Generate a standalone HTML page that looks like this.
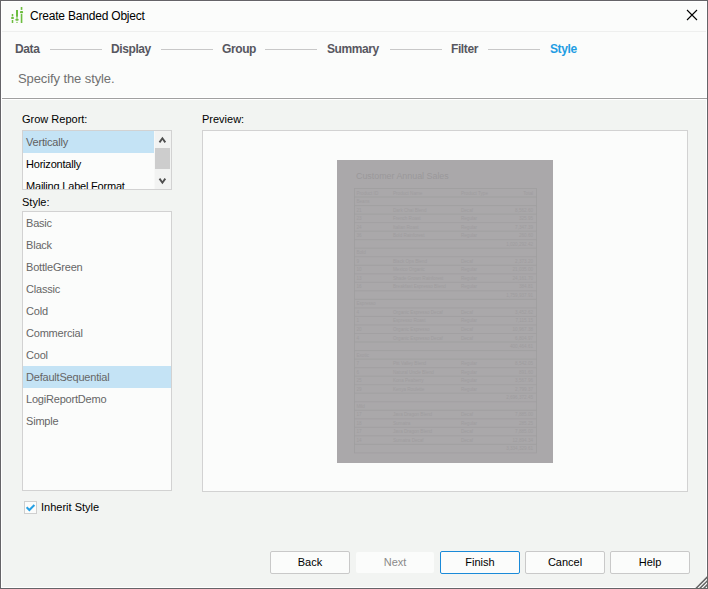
<!DOCTYPE html>
<html><head><meta charset="utf-8">
<style>
*{margin:0;padding:0;box-sizing:border-box}
html,body{width:708px;height:589px;overflow:hidden;background:#f2f4f2;font-family:"Liberation Sans",sans-serif}
.a{position:absolute;white-space:nowrap}
#win{position:absolute;left:0;top:0;width:708px;height:589px;border:1px solid #656468;background:#f2f4f2}
#inner{position:absolute;left:1px;top:1px;width:706px;height:587px;border:1px solid #ffffff}
#head{position:absolute;left:2px;top:2px;width:704px;height:96px;background:#fbfcfb}
.t11{font-size:11px;line-height:11px}
.li{letter-spacing:-0.2px}
.step{font-size:12px;line-height:12px;letter-spacing:-0.4px;font-weight:bold;color:#575760}
.ln{position:absolute;height:1px;background:#c8c8c8;top:49px;width:52px}
.lb{position:absolute;border:1px solid #d2d2d2;background:#fbfcfb}
.row{position:absolute;left:0;height:22px;width:100%}
.btn{position:absolute;top:551px;width:80px;height:23px;border:1px solid #c9c9c9;border-radius:2px;background:#fbfcfb;font-size:11px;text-align:center;line-height:21px;color:#000}
</style></head><body>
<div id="win"></div>
<div id="inner"></div>
<div id="head"></div>
<!-- title separator -->
<div class="a" style="left:2px;top:31px;width:704px;height:1px;background:#eeefee"></div>
<!-- icon -->
<svg class="a" style="left:0;top:0" width="30" height="30" viewBox="0 0 30 30">
 <g fill="#6cbd3f">
  <rect x="11.75" y="14" width="1.5" height="2.4"/>
  <rect x="11" y="16.9" width="3" height="2" rx="1"/>
  <rect x="11.75" y="20" width="1.5" height="3"/>
  <rect x="16" y="10" width="2" height="6.8"/>
  <rect x="16" y="16.8" width="2" height="2" opacity="0.5"/>
  <rect x="15.3" y="18.8" width="3.4" height="2" rx="1"/>
  <rect x="16" y="21.9" width="2" height="0.9" opacity="0.7"/>
  <rect x="20.75" y="7" width="1.6" height="2.9"/>
  <rect x="20" y="11.1" width="3.1" height="2.1" rx="0.8"/>
  <rect x="20.75" y="14" width="1.6" height="9"/>
 </g>
</svg>
<div class="a" style="left:30px;top:10px;font-size:12px;letter-spacing:-0.2px;line-height:12px;color:#000">Create Banded Object</div>
<!-- close -->
<svg class="a" style="left:686px;top:9px" width="12" height="12" viewBox="0 0 12 12">
 <path d="M1 1L11 11M11 1L1 11" stroke="#000" stroke-width="1.1"/>
</svg>
<!-- steps -->
<div class="a step" style="left:15px;top:43px">Data</div>
<div class="ln" style="left:50px"></div>
<div class="a step" style="left:111px;top:43px">Display</div>
<div class="ln" style="left:161px"></div>
<div class="a step" style="left:222px;top:43px">Group</div>
<div class="ln" style="left:265px"></div>
<div class="a step" style="left:327px;top:43px">Summary</div>
<div class="ln" style="left:390px"></div>
<div class="a step" style="left:451px;top:43px">Filter</div>
<div class="ln" style="left:488px"></div>
<div class="a step" style="left:550px;top:43px;color:#1f9de3">Style</div>
<div class="a" style="left:18px;top:72px;font-size:13px;letter-spacing:-0.1px;line-height:13px;color:#707070">Specify the style.</div>
<!-- separator -->
<div class="a" style="left:2px;top:97px;width:704px;height:1px;background:#ffffff"></div>
<div class="a" style="left:2px;top:98px;width:705px;height:1px;background:#a0a0a0"></div>
<div class="a" style="left:2px;top:99px;width:704px;height:1px;background:#ffffff"></div>

<!-- grow report -->
<div class="a t11" style="left:22px;top:114px;color:#000">Grow Report:</div>
<div class="lb" style="left:22px;top:130px;width:150px;height:60px;overflow:hidden">
  <div class="row" style="top:0;width:131px;background:#c4e3f5"></div>
  <div class="a t11 li" style="left:3px;top:6px;color:#5f5f5f">Vertically</div>
  <div class="a t11 li" style="left:3px;top:28px;color:#000">Horizontally</div>
  <div class="a t11 li" style="left:3px;top:50px;color:#000">Mailing Label Format</div>
  <div class="a" style="left:131px;top:0;width:17px;height:58px;background:#f2f3f2;border-left:1px solid #f7f8f7"></div>
  <div class="a" style="left:132px;top:17px;width:15px;height:21px;background:#cdcdcd"></div>
  <svg class="a" style="left:131px;top:0" width="17" height="58" viewBox="0 0 17 58">
    <path d="M5.5 11.4L8.4 7.3L11.3 11.4M5.5 47.6L8.4 51.7L11.3 47.6" fill="none" stroke="#4f4f4f" stroke-width="1.9"/>
  </svg>
</div>

<!-- style -->
<div class="a t11" style="left:22px;top:197px;color:#000">Style:</div>
<div class="lb" style="left:22px;top:211px;width:150px;height:280px;overflow:hidden">
  <div class="row" style="top:154px;background:#c4e3f5"></div>
  <div class="a t11 li" style="left:3px;top:6px;color:#666">Basic</div>
  <div class="a t11 li" style="left:3px;top:28px;color:#666">Black</div>
  <div class="a t11 li" style="left:3px;top:50px;color:#666">BottleGreen</div>
  <div class="a t11 li" style="left:3px;top:72px;color:#666">Classic</div>
  <div class="a t11 li" style="left:3px;top:94px;color:#666">Cold</div>
  <div class="a t11 li" style="left:3px;top:116px;color:#666">Commercial</div>
  <div class="a t11 li" style="left:3px;top:138px;color:#666">Cool</div>
  <div class="a t11 li" style="left:3px;top:160px;color:#666">DefaultSequential</div>
  <div class="a t11 li" style="left:3px;top:182px;color:#666">LogiReportDemo</div>
  <div class="a t11 li" style="left:3px;top:204px;color:#666">Simple</div>
</div>

<!-- inherit -->
<div class="a" style="left:24px;top:501px;width:13px;height:13px;border:1px solid #cfcfcf;background:#fbfcfb"></div>
<svg class="a" style="left:24px;top:501px" width="13" height="13" viewBox="0 0 13 13">
  <path d="M2.6 6.3L5.4 9.0L10.4 4.0" fill="none" stroke="#25a0e4" stroke-width="2"/>
</svg>
<div class="a t11" style="left:41px;top:502px;color:#000">Inherit Style</div>

<!-- preview -->
<div class="a t11" style="left:202px;top:114px;color:#000">Preview:</div>
<div class="lb" style="left:202px;top:130px;width:486px;height:362px"></div>
<svg class="a" style="left:337px;top:160px" width="216" height="303" viewBox="0 0 216 303">
<rect x="0" y="0" width="216" height="303" fill="#aaa8aa"/>
<text x="19" y="18.6" font-family="Liberation Sans" font-size="8.9" fill="#9a989a">Customer Annual Sales</text>
<g stroke="#a09ea0" stroke-width="0.8" fill="none">
<rect x="17.5" y="28.5" width="182.0" height="264.43"/>
<line x1="17.5" y1="37.03" x2="199.5" y2="37.03"/>
<line x1="17.5" y1="45.56" x2="199.5" y2="45.56"/>
<line x1="17.5" y1="54.09" x2="199.5" y2="54.09"/>
<line x1="17.5" y1="62.62" x2="199.5" y2="62.62"/>
<line x1="17.5" y1="71.15" x2="199.5" y2="71.15"/>
<line x1="17.5" y1="79.68" x2="199.5" y2="79.68"/>
<line x1="17.5" y1="88.21" x2="199.5" y2="88.21"/>
<line x1="17.5" y1="96.74" x2="199.5" y2="96.74"/>
<line x1="17.5" y1="105.27" x2="199.5" y2="105.27"/>
<line x1="17.5" y1="113.80" x2="199.5" y2="113.80"/>
<line x1="17.5" y1="122.33" x2="199.5" y2="122.33"/>
<line x1="17.5" y1="130.86" x2="199.5" y2="130.86"/>
<line x1="17.5" y1="139.39" x2="199.5" y2="139.39"/>
<line x1="17.5" y1="147.92" x2="199.5" y2="147.92"/>
<line x1="17.5" y1="156.45" x2="199.5" y2="156.45"/>
<line x1="17.5" y1="164.98" x2="199.5" y2="164.98"/>
<line x1="17.5" y1="173.51" x2="199.5" y2="173.51"/>
<line x1="17.5" y1="182.04" x2="199.5" y2="182.04"/>
<line x1="17.5" y1="190.57" x2="199.5" y2="190.57"/>
<line x1="17.5" y1="199.10" x2="199.5" y2="199.10"/>
<line x1="17.5" y1="207.63" x2="199.5" y2="207.63"/>
<line x1="17.5" y1="216.16" x2="199.5" y2="216.16"/>
<line x1="17.5" y1="224.69" x2="199.5" y2="224.69"/>
<line x1="17.5" y1="233.22" x2="199.5" y2="233.22"/>
<line x1="17.5" y1="241.75" x2="199.5" y2="241.75"/>
<line x1="17.5" y1="250.28" x2="199.5" y2="250.28"/>
<line x1="17.5" y1="258.81" x2="199.5" y2="258.81"/>
<line x1="17.5" y1="267.34" x2="199.5" y2="267.34"/>
<line x1="17.5" y1="275.87" x2="199.5" y2="275.87"/>
<line x1="17.5" y1="284.40" x2="199.5" y2="284.40"/>
</g>
<g font-family="Liberation Sans" font-size="4.6" fill="#9f9d9f">
<text x="19.5" y="34.50">Product ID</text>
<text x="56" y="34.50">Product Name</text>
<text x="124" y="34.50">Product Type</text>
<text x="196" y="34.50" text-anchor="end">Total</text>
<text x="19.5" y="43.03">Beans</text>
<text x="19.5" y="51.56">21</text>
<text x="56" y="51.56">Dark Chai Blend</text>
<text x="124" y="51.56">Decaf</text>
<text x="196" y="51.56" text-anchor="end">8,562.60</text>
<text x="19.5" y="60.09">23</text>
<text x="56" y="60.09">French Roast</text>
<text x="124" y="60.09">Regular</text>
<text x="196" y="60.09" text-anchor="end">325.95</text>
<text x="19.5" y="68.62">24</text>
<text x="56" y="68.62">Italian Roast</text>
<text x="124" y="68.62">Regular</text>
<text x="196" y="68.62" text-anchor="end">7,347.39</text>
<text x="19.5" y="77.15">36</text>
<text x="56" y="77.15">Bold Rainforest</text>
<text x="124" y="77.15">Regular</text>
<text x="196" y="77.15" text-anchor="end">260.60</text>
<text x="196" y="85.68" text-anchor="end">1,020,292.42</text>
<text x="19.5" y="94.21">Bold</text>
<text x="19.5" y="102.74">9</text>
<text x="56" y="102.74">Black Ops Blend</text>
<text x="124" y="102.74">Decaf</text>
<text x="196" y="102.74" text-anchor="end">2,373.20</text>
<text x="19.5" y="111.27">10</text>
<text x="56" y="111.27">Mexico Organic</text>
<text x="124" y="111.27">Regular</text>
<text x="196" y="111.27" text-anchor="end">21,035.00</text>
<text x="19.5" y="119.80">13</text>
<text x="56" y="119.80">Shade Grown Rainforest</text>
<text x="124" y="119.80">Regular</text>
<text x="196" y="119.80" text-anchor="end">24,161.70</text>
<text x="19.5" y="128.33">16</text>
<text x="56" y="128.33">Breakfast Espresso Blend</text>
<text x="124" y="128.33">Regular</text>
<text x="196" y="128.33" text-anchor="end">384.81</text>
<text x="196" y="136.86" text-anchor="end">1,759,937.91</text>
<text x="19.5" y="145.39">Espresso</text>
<text x="19.5" y="153.92">4</text>
<text x="56" y="153.92">Organic Espresso Decaf</text>
<text x="124" y="153.92">Decaf</text>
<text x="196" y="153.92" text-anchor="end">3,452.62</text>
<text x="19.5" y="162.45">1</text>
<text x="56" y="162.45">Espresso Roast</text>
<text x="124" y="162.45">Regular</text>
<text x="196" y="162.45" text-anchor="end">7,115.15</text>
<text x="19.5" y="170.98">20</text>
<text x="56" y="170.98">Organic Espresso</text>
<text x="124" y="170.98">Decaf</text>
<text x="196" y="170.98" text-anchor="end">10,967.38</text>
<text x="19.5" y="179.51">4</text>
<text x="56" y="179.51">Organic Espresso Decaf</text>
<text x="124" y="179.51">Decaf</text>
<text x="196" y="179.51" text-anchor="end">6,804.97</text>
<text x="196" y="188.04" text-anchor="end">400,464.61</text>
<text x="19.5" y="196.57">Exotic</text>
<text x="19.5" y="205.10">7</text>
<text x="56" y="205.10">Pitt Valley Blend</text>
<text x="124" y="205.10">Regular</text>
<text x="196" y="205.10" text-anchor="end">8,542.05</text>
<text x="19.5" y="213.63">6</text>
<text x="56" y="213.63">Natural Uncle Blend</text>
<text x="124" y="213.63">Regular</text>
<text x="196" y="213.63" text-anchor="end">891.60</text>
<text x="19.5" y="222.16">25</text>
<text x="56" y="222.16">Kona Peaberry</text>
<text x="124" y="222.16">Regular</text>
<text x="196" y="222.16" text-anchor="end">3,567.96</text>
<text x="19.5" y="230.69">29</text>
<text x="56" y="230.69">Kenya Roulette</text>
<text x="124" y="230.69">Regular</text>
<text x="196" y="230.69" text-anchor="end">2,799.37</text>
<text x="196" y="239.22" text-anchor="end">2,696,372.45</text>
<text x="19.5" y="247.75">Mild</text>
<text x="19.5" y="256.28">17</text>
<text x="56" y="256.28">Java Dragon Blend</text>
<text x="124" y="256.28">Decaf</text>
<text x="196" y="256.28" text-anchor="end">7,885.00</text>
<text x="19.5" y="264.81">18</text>
<text x="56" y="264.81">Sumatra</text>
<text x="124" y="264.81">Regular</text>
<text x="196" y="264.81" text-anchor="end">285.25</text>
<text x="19.5" y="273.34">17</text>
<text x="56" y="273.34">Java Dragon Blend</text>
<text x="124" y="273.34">Decaf</text>
<text x="196" y="273.34" text-anchor="end">7,885.00</text>
<text x="19.5" y="281.87">14</text>
<text x="56" y="281.87">Sumatra Decaf</text>
<text x="124" y="281.87">Decaf</text>
<text x="196" y="281.87" text-anchor="end">12,894.34</text>
<text x="196" y="290.40" text-anchor="end">3,334,329.61</text>
</g></svg>

<!-- buttons -->
<div class="btn" style="left:270px">Back</div>
<div class="btn" style="left:356px;top:552px;width:78px;height:21px;line-height:21px;border:0;background:#fbfcfb;color:#8a8a8a">Next</div>
<div class="btn" style="left:440px;border-color:#1a8ad8">Finish</div>
<div class="btn" style="left:525px">Cancel</div>
<div class="btn" style="left:610px">Help</div>
<svg class="a" style="left:692px;top:573px" width="16" height="16" viewBox="0 0 16 16">
  <polygon points="15,3 15,15 3,15" fill="#ffffff"/>
  <g stroke="#656565" stroke-width="1.6">
    <line x1="3.9" y1="15.5" x2="15.5" y2="3.9"/>
    <line x1="7.7" y1="15.5" x2="15.5" y2="7.7"/>
    <line x1="11.5" y1="15.5" x2="15.5" y2="11.5"/>
  </g>
  <rect x="15" y="0" width="1" height="16" fill="#656565"/>
  <rect x="0" y="15" width="16" height="1" fill="#656565"/>
</svg>
</body></html>
